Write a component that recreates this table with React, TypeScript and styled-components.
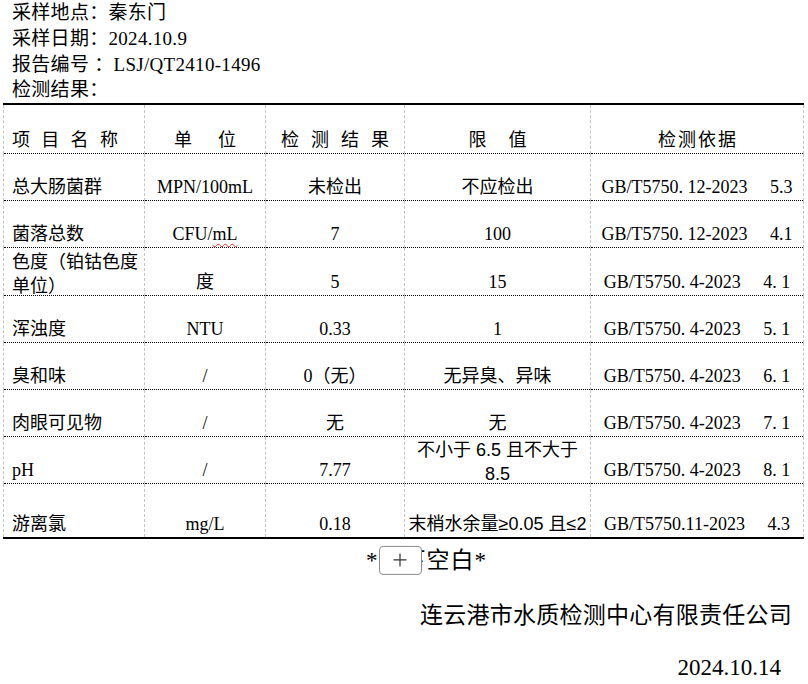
import React from "react";
import styled, { createGlobalStyle } from "styled-components";

const GlobalStyle = createGlobalStyle`
  html, body {
    margin: 0;
    padding: 0;
    background: #ffffff;
    color: #000000;
    font-family: "Liberation Serif", "Noto Sans CJK SC", serif;
  }
`;

const Page = styled.div`
  width: 808px;
  height: 684px;
  overflow: hidden;
`;

const Info = styled.div`
  padding-left: 12px;
  font-size: 19px;
  line-height: 25.75px;
  letter-spacing: 0.3px;
`;

const InfoLine = styled.div`
  white-space: pre;
`;

const ReportTable = styled.table`
  margin-left: 3px;
  width: 800px;
  border-collapse: collapse;
  table-layout: fixed;
  font-size: 18px;
  border-top: 2px solid #000;
  border-bottom: 2px solid #000;
`;

const Row = styled.tr<{ $h: number }>`
  height: ${(p) => p.$h}px;
`;

const Cell = styled.td<{ $left?: boolean; $sans?: boolean; $nowrap?: boolean }>`
  border-left: 1px dashed #c4c4c4;
  border-right: 1px dashed #c4c4c4;
  border-bottom: 1px dotted #000;
  vertical-align: bottom;
  padding: 0 ${(p) => (p.$left ? "6px 1px 8px" : "2px 1px 2px")};
  text-align: ${(p) => (p.$left ? "left" : "center")};
  line-height: 24px;
  font-weight: normal;
  font-family: ${(p) =>
    p.$sans
      ? `"Liberation Sans", "Noto Sans CJK SC", sans-serif`
      : `"Liberation Serif", "Noto Sans CJK SC", serif`};
  white-space: ${(p) => (p.$nowrap ? "pre" : "normal")};
`;

const Spaced = styled.span<{ $ls: number }>`
  letter-spacing: ${(p) => p.$ls}px;
  margin-right: -${(p) => p.$ls}px;
`;

const WrapBox = styled.div`
  margin-bottom: -4px;
`;

const SpellErr = styled.span`
  text-decoration: underline wavy #e03030;
  text-decoration-thickness: 1px;
  text-underline-offset: 3px;
`;

const BlankNote = styled.div`
  margin-top: 7px;
  padding-left: 45px;
  text-align: center;
  font-size: 23px;
  line-height: 30px;
  letter-spacing: 1px;
`;

const Covered = styled.span`
  position: relative;
`;

const AddHandle = styled.span`
  position: absolute;
  left: 0px;
  top: 50%;
  transform: translateY(-52%);
  width: 43px;
  height: 29px;
  box-sizing: border-box;
  border: 1px solid #8c8c8c;
  border-radius: 4px;
  background: #ffffff;
  display: flex;
  align-items: center;
  justify-content: center;
`;

const Company = styled.div`
  margin-top: 25px;
  text-align: right;
  padding-right: 16px;
  font-size: 23px;
  line-height: 30px;
  letter-spacing: 0.25px;
`;

const DateLine = styled.div`
  margin-top: 22px;
  text-align: right;
  padding-right: 27px;
  font-size: 23px;
  line-height: 30px;
`;

type RowData = {
  name: React.ReactNode;
  unit: React.ReactNode;
  result: string;
  limit: React.ReactNode;
  limitSans?: boolean;
  std: string;
  h: number;
};

const rows: RowData[] = [
  { name: "总大肠菌群", unit: "MPN/100mL", result: "未检出", limit: "不应检出", std: "GB/T5750. 12-2023     5.3", h: 47 },
  {
    name: "菌落总数",
    unit: (
      <>
        CFU/<SpellErr>mL</SpellErr>
      </>
    ),
    result: "7",
    limit: "100",
    std: "GB/T5750. 12-2023     4.1",
    h: 47,
  },
  {
    name: <WrapBox>色度（铂钴色度单位）</WrapBox>,
    unit: "度",
    result: "5",
    limit: "15",
    std: "GB/T5750. 4-2023     4. 1",
    h: 48,
  },
  { name: "浑浊度", unit: "NTU", result: "0.33", limit: "1", std: "GB/T5750. 4-2023     5. 1", h: 47 },
  { name: "臭和味", unit: "/", result: "0（无）", limit: "无异臭、异味", std: "GB/T5750. 4-2023     6. 1", h: 47 },
  { name: "肉眼可见物", unit: "/", result: "无", limit: "无", std: "GB/T5750. 4-2023     7. 1", h: 47 },
  {
    name: "pH",
    unit: "/",
    result: "7.77",
    limit: <WrapBox>不小于 6.5 且不大于 8.5</WrapBox>,
    limitSans: true,
    std: "GB/T5750. 4-2023     8. 1",
    h: 47,
  },
  {
    name: "游离氯",
    unit: "mg/L",
    result: "0.18",
    limit: "末梢水余量≥0.05 且≤2",
    limitSans: true,
    std: "GB/T5750.11-2023     4.3",
    h: 55,
  },
];

const PlusIcon = () => (
  <svg width="14" height="14" viewBox="0 0 14 14" aria-hidden="true">
    <path d="M7 0.5V13.5M0.5 7H13.5" stroke="#333" strokeWidth="1.2" fill="none" />
  </svg>
);

export default function App() {
  return (
    <Page>
      <GlobalStyle />
      <Info>
        <InfoLine>采样地点：秦东门</InfoLine>
        <InfoLine>采样日期：2024.10.9</InfoLine>
        <InfoLine>报告编号 ：LSJ/QT2410-1496</InfoLine>
        <InfoLine>检测结果：</InfoLine>
      </Info>
      <ReportTable>
        <colgroup>
          <col style={{ width: 141 }} />
          <col style={{ width: 121 }} />
          <col style={{ width: 139 }} />
          <col style={{ width: 186 }} />
          <col style={{ width: 213 }} />
        </colgroup>
        <thead>
          <Row $h={49}>
            <Cell as="th" $left>
              <Spaced $ls={11.3}>项目名称</Spaced>
            </Cell>
            <Cell as="th">
              <Spaced $ls={26}>单位</Spaced>
            </Cell>
            <Cell as="th">
              <Spaced $ls={12}>检测结果</Spaced>
            </Cell>
            <Cell as="th">
              <Spaced $ls={22}>限值</Spaced>
            </Cell>
            <Cell as="th">
              <Spaced $ls={2}>检测依据</Spaced>
            </Cell>
          </Row>
        </thead>
        <tbody>
          {rows.map((r, i) => (
            <Row key={i} $h={r.h}>
              <Cell $left>{r.name}</Cell>
              <Cell>{r.unit}</Cell>
              <Cell>{r.result}</Cell>
              <Cell $sans={r.limitSans} $nowrap={r.limitSans && i === rows.length - 1}>
                {r.limit}
              </Cell>
              <Cell $nowrap>{r.std}</Cell>
            </Row>
          ))}
        </tbody>
      </ReportTable>
      <BlankNote>
        *
        <Covered>
          以下
          <AddHandle>
            <PlusIcon />
          </AddHandle>
        </Covered>
        空白*
      </BlankNote>
      <Company>连云港市水质检测中心有限责任公司</Company>
      <DateLine>2024.10.14</DateLine>
    </Page>
  );
}
